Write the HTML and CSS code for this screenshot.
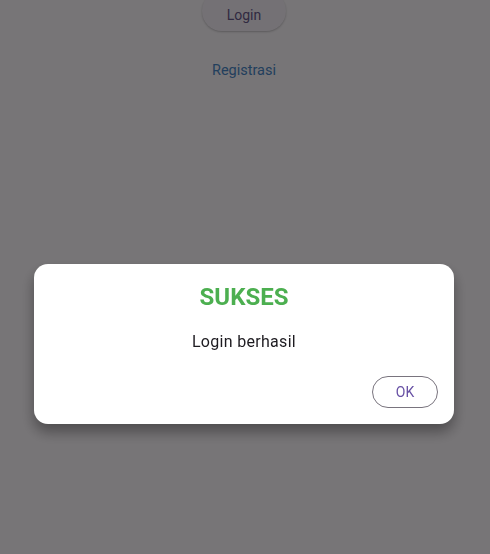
FILE: index.html
```html
<!DOCTYPE html>
<html lang="id">
<head>
<meta charset="utf-8">
<link rel="stylesheet" href="styles.css">
</head>
<body>
<main class="page">
  <button class="login-btn">Login</button>
  <a class="register-link">Registrasi</a>
</main>
<div class="scrim">
  <div class="dialog">
    <h2 class="dialog-title">SUKSES</h2>
    <p class="dialog-text">Login berhasil</p>
    <div class="dialog-actions">
      <button class="ok-btn">OK</button>
    </div>
  </div>
</div>
</body>
</html>
```

FILE: styles.css
```css
html, body {
  margin: 0;
  padding: 0;
  height: 100%;
}
body {
  background: #fefafe;
  font-family: Roboto, "Noto Sans", sans-serif;
  overflow: hidden;
  padding-right: 2px;
  box-sizing: border-box;
}
.page {
  display: flex;
  flex-direction: column;
  align-items: center;
  margin-top: -9px;
}
.login-btn {
  font-family: inherit;
  font-size: 14px;
  color: #6a5a8c;
  background: #f9f3fb;
  border: none;
  border-radius: 20px;
  width: 84px;
  height: 40px;
  padding-top: 9px;
  box-shadow: 0 1px 2px rgba(0,0,0,0.22);
}
.register-link {
  margin-top: 31px;
  font-size: 14.5px;
  color: #4a88c8;
}
.scrim {
  position: fixed;
  inset: 0;
  padding-right: 2px;
  background: rgba(0,0,0,0.535);
  display: flex;
  justify-content: center;
  align-items: flex-start;
  padding-top: 264px;
}
.dialog {
  width: 420px;
  height: 160px;
  box-sizing: border-box;
  background: #ffffff;
  border-radius: 14px;
  box-shadow: 0 8px 14px rgba(0,0,0,0.35);
  display: flex;
  flex-direction: column;
  align-items: center;
  padding: 19px 16px 16px;
}
.dialog-title {
  margin: 0;
  font-size: 24px;
  font-weight: 700;
  color: #4caf50;
  line-height: 28px;
}
.dialog-text {
  margin: 21px 0 0;
  font-size: 16px;
  color: #1d1b20;
  line-height: 20px;
  letter-spacing: 0.3px;
}
.dialog-actions {
  align-self: stretch;
  display: flex;
  justify-content: flex-end;
  margin-top: auto;
}
.ok-btn {
  font-family: inherit;
  font-size: 14px;
  color: #6750a4;
  background: transparent;
  border: 1px solid #79747e;
  border-radius: 16px;
  width: 66px;
  height: 32px;
}
```
